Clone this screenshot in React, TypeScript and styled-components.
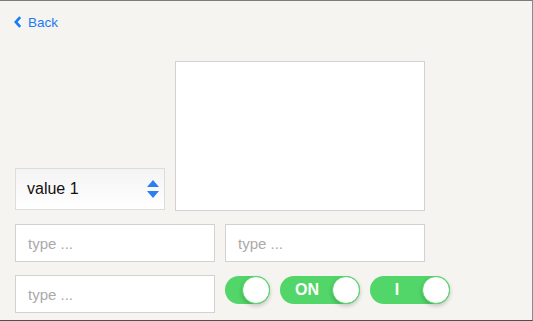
import styled, { createGlobalStyle } from 'styled-components';

const GlobalStyle = createGlobalStyle`
    html, body {
        margin: 0;
        padding: 0;
        background: #f5f4f0;
    }
    * {
        box-sizing: border-box;
    }
`;

const Window = styled.div`
    width: 533px;
    height: 321px;
    display: flex;
    flex-direction: column;
    padding: 12px 0 0 15px;
    background: #f5f4f0;
    border-top: 1px solid #7c7c7c;
    border-right: 1px solid #8a8a8a;
    border-bottom: 1px solid #4f4f4f;
    font-family: 'Liberation Sans', Arial, sans-serif;
`;

const BackLink = styled.a`
    display: flex;
    align-items: center;
    gap: 6px;
    height: 18px;
    margin-left: -1px;
    color: #1a7cf5;
    font-size: 13.5px;
    text-decoration: none;
    cursor: pointer;
`;

const Row = styled.div<{ top: number }>`
    display: flex;
    align-items: flex-end;
    gap: 10px;
    margin-top: ${p => p.top}px;
`;

const SelectBox = styled.div`
    display: flex;
    align-items: center;
    justify-content: space-between;
    width: 150px;
    height: 42px;
    margin-bottom: 1px;
    padding: 0 4px 0 11px;
    border: 1px solid #dcdcdc;
    background: linear-gradient(#f4f4f4, #ffffff);
    font-size: 16px;
    color: #111;
`;

const TextArea = styled.div`
    width: 250px;
    height: 150px;
    border: 1px solid #d2d2d2;
    background: #fff;
`;

const Input = styled.input`
    width: 200px;
    height: 38px;
    padding: 0 12px;
    border: 1px solid #d2d2d2;
    background: #fff;
    font-family: 'Liberation Sans', Arial, sans-serif;
    font-size: 15px;
    outline: none;

    &::placeholder {
        color: #aaa;
    }
`;

const Toggles = styled.div`
    display: flex;
    gap: 10px;
    align-self: flex-start;
    margin-top: 1px;
`;

const Track = styled.div<{ w: number }>`
    display: flex;
    align-items: center;
    width: ${p => p.w}px;
    height: 28px;
    border-radius: 14px;
    background: #52d569;
`;

const Label = styled.span`
    flex: 1;
    text-align: center;
    color: #fff;
    font-size: 16px;
    font-weight: bold;
    padding-left: 2px;
`;

const Knob = styled.div`
    width: 28px;
    height: 28px;
    margin-left: auto;
    border-radius: 50%;
    background: #fff;
    border: 1px solid #52d569;
    box-shadow: 0 2px 4px rgba(0, 0, 0, 0.2);
`;

const Toggle = ({ w, label }: { w: number; label?: string }) => (
    <Track w={w}>
        {label && <Label>{label}</Label>}
        <Knob />
    </Track>
);

export default function App() {
    return (
        <Window>
            <GlobalStyle />
            <BackLink>
                <svg width="8" height="12" viewBox="0 0 8 12">
                    <path
                        d="M6.2 1.2 L1.8 6 L6.2 10.8"
                        fill="none"
                        stroke="#1a7cf5"
                        strokeWidth="2.6"
                    />
                </svg>
                Back
            </BackLink>
            <Row top={30}>
                <SelectBox>
                    value 1
                    <svg width="14" height="21" viewBox="0 0 14 21">
                        <path d="M7 1 L13 8 L1 8 Z" fill="#2a7ff5" />
                        <path d="M1 12 L13 12 L7 19 Z" fill="#2a7ff5" />
                    </svg>
                </SelectBox>
                <TextArea />
            </Row>
            <Row top={13}>
                <Input placeholder="type ..." />
                <Input placeholder="type ..." />
            </Row>
            <Row top={13}>
                <Input placeholder="type ..." />
                <Toggles>
                    <Toggle w={45} />
                    <Toggle w={80} label="ON" />
                    <Toggle w={80} label="I" />
                </Toggles>
            </Row>
        </Window>
    );
}
